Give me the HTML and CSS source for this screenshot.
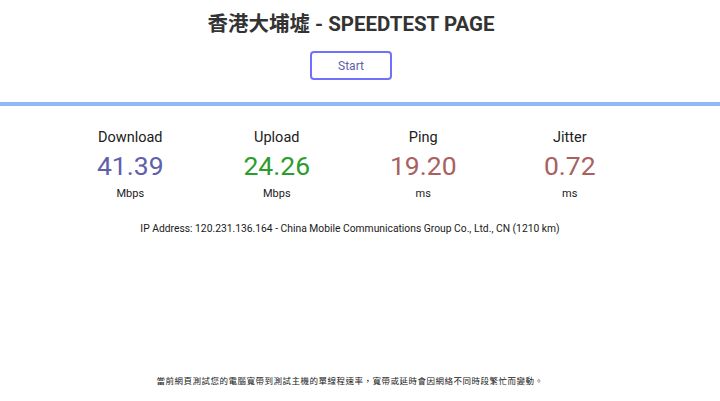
FILE: index.html
```html
<!DOCTYPE html>
<html>
<head>
    <meta charset="utf-8">
    <title>香港大埔墟 - SPEEDTEST PAGE</title>
    <link rel="stylesheet" href="styles.css">
</head>
<body>
<div class="page">
    <div class="page-header">
        <h1>香港大埔墟 - SPEEDTEST PAGE</h1>
        <button id="startButton" class="start-button">Start</button>
    </div>
    <div class="divider"></div>

    <div class="test-area">
        <div class="test-group">
            <div class="test-name">Download</div>
            <div class="meter-text download">41.39</div>
            <div class="unit">Mbps</div>
        </div>
        <div class="test-group">
            <div class="test-name">Upload</div>
            <div class="meter-text upload">24.26</div>
            <div class="unit">Mbps</div>
        </div>
        <div class="test-group">
            <div class="test-name">Ping</div>
            <div class="meter-text ping">19.20</div>
            <div class="unit">ms</div>
        </div>
        <div class="test-group">
            <div class="test-name">Jitter</div>
            <div class="meter-text ping">0.72</div>
            <div class="unit">ms</div>
        </div>
    </div>

    <div class="ip-area">IP Address: 120.231.136.164 - China Mobile Communications Group Co., Ltd., CN (1210 km)</div>

    <div class="page-footer">當前網頁測試您的電腦寬帶到測試主機的單線程速率，寬帶或延時會因網絡不同時段繁忙而變動。</div>
</div>
</body>
</html>
```

FILE: styles.css
```css
* {
    margin: 0;
    padding: 0;
    box-sizing: border-box;
}

body {
    font-family: Roboto, "Noto Sans CJK TC", sans-serif;
    background: #ffffff;
    color: #202020;
}

.page {
    display: flex;
    flex-direction: column;
    min-height: 100vh;
}

.page-header {
    display: flex;
    flex-direction: column;
    align-items: center;
    padding: 10px 18px 0 0;
}

.page-header h1 {
    font-size: 20.5px;
    font-weight: bold;
    color: #333333;
    line-height: 28px;
}

.start-button {
    margin-top: 13px;
    width: 82px;
    height: 29px;
    background: #ffffff;
    border: 2px solid #7070ff;
    border-radius: 4px;
    color: #6060aa;
    font-family: Roboto, sans-serif;
    font-size: 12px;
    cursor: pointer;
}

.divider {
    margin-top: 22px;
    height: 4px;
    background: #90b8f8;
}

.test-area {
    display: grid;
    grid-template-columns: repeat(4, 146.5px);
    justify-content: center;
    margin: 21px 20px 0 0;
    text-align: center;
}

.test-name {
    font-size: 14.5px;
    line-height: 22px;
    color: #202020;
}

.meter-text {
    font-size: 26.5px;
    line-height: 34px;
}

.download {
    color: #6060aa;
}

.upload {
    color: #2c9c2c;
}

.ping {
    color: #aa6060;
}

.unit {
    font-size: 11px;
    line-height: 18px;
    margin-top: 2px;
}

.ip-area {
    margin: 18px 20px 0 0;
    text-align: center;
    font-size: 10.3px;
    line-height: 16px;
}

.page-footer {
    margin-top: auto;
    padding: 0 20px 14px 0;
    text-align: center;
    font-size: 8.5px;
    letter-spacing: 0.5px;
    line-height: 12px;
    color: #202020;
}
```
